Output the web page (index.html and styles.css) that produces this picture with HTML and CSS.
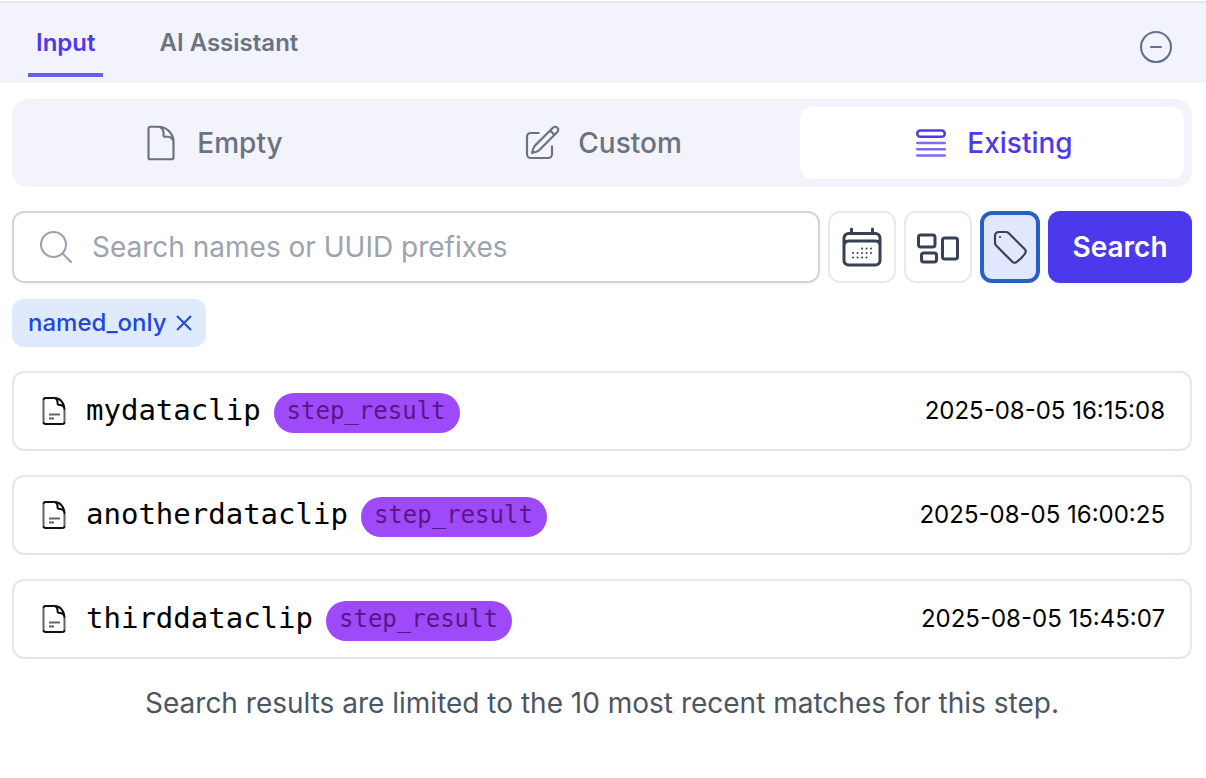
FILE: index.html
```html
<!DOCTYPE html>
<html lang="en">
<head>
<meta charset="utf-8">
<meta name="viewport" content="width=device-width, initial-scale=1">
<title>Input</title>
<link rel="stylesheet" href="styles.css">
</head>
<body>
<svg class="sprite" aria-hidden="true">
  <symbol id="clip" viewBox="0 0 24 28">
    <path opacity=".65" d="M1.500 3V25M22.500 13V25M7 17.500H18M7 21.500H12"/>
    <path d="M1.500 3Q1.500 1 3.500 1H13C18 1 22.500 6 22.500 13M1.500 25Q1.500 27 3.500 27H20.500Q22.500 27 22.500 25M13 1Q15.500 2 15.500 5V6Q15.500 8 17.500 8H18.500Q22.500 8.500 22.500 13"/>
  </symbol>
</svg>
<header class="bar">
  <nav class="tabs">
    <button class="tab tab-active" type="button">Input</button>
    <button class="tab" type="button">AI Assistant</button>
  </nav>
  <button class="collapse" type="button" aria-label="Collapse">
    <svg class="icon icon-thin" viewBox="0 0 24 24"><path d="M15 12H9m12 0a9 9 0 1 1-18 0 9 9 0 0 1 18 0Z"/></svg>
  </button>
</header>
<main class="panel">
  <div class="modes">
    <button class="mode" type="button">
      <svg class="icon icon-thin" viewBox="0 0 24 24"><path d="M19.500 14.250v-2.625a3.375 3.375 0 0 0-3.375-3.375h-1.500A1.125 1.125 0 0 1 13.500 7.125v-1.500a3.375 3.375 0 0 0-3.375-3.375H8.250m2.250 0H5.625c-.621 0-1.125.504-1.125 1.125v17.250c0 .621.504 1.125 1.125 1.125h12.750c.621 0 1.125-.504 1.125-1.125V11.250a9 9 0 0 0-9-9Z"/></svg>
      Empty
    </button>
    <button class="mode" type="button">
      <svg class="icon icon-thin" viewBox="0 0 24 24"><path d="m16.862 4.487 1.687-1.688a1.875 1.875 0 1 1 2.652 2.652L10.582 16.070a4.500 4.500 0 0 1-1.897 1.130L6 18l.8-2.685a4.500 4.500 0 0 1 1.130-1.897l8.932-8.931Zm0 0L19.500 7.125M18 14v4.750A2.250 2.250 0 0 1 15.750 21H5.250A2.250 2.250 0 0 1 3 18.750V8.250A2.250 2.250 0 0 1 5.250 6H10"/></svg>
      Custom
    </button>
    <button class="mode mode-active" type="button">
      <svg class="icon" viewBox="0 0 24 24"><path opacity=".75" d="M3.750 12h16.500m-16.500 3.750h16.500M3.750 19.500h16.500"/><path d="M5.625 4.500h12.750a1.875 1.875 0 0 1 0 3.750H5.625a1.875 1.875 0 0 1 0-3.750Z"/></svg>
      Existing
    </button>
  </div>

  <form class="search">
    <label class="field">
      <svg class="icon icon-thin" viewBox="0 0 24 24"><path d="m21 21-5.197-5.197m0 0A7.500 7.500 0 1 0 5.196 5.196a7.500 7.500 0 0 0 10.607 10.607Z"/></svg>
      <input class="query" type="text" placeholder="Search names or UUID prefixes" aria-label="Search names or UUID prefixes">
    </label>
    <button class="filter" type="button" aria-label="Filter by date">
      <svg class="icon icon-large" viewBox="0 0 24 24"><path d="M6.750 3v2.250M17.250 3v2.250M3 18.750V7.500a2.250 2.250 0 0 1 2.250-2.250h13.500A2.250 2.250 0 0 1 21 7.500v11.250m-18 0A2.250 2.250 0 0 0 5.250 21h13.500A2.250 2.250 0 0 0 21 18.750m-18 0v-7.500A2.250 2.250 0 0 1 5.250 9h13.500A2.250 2.250 0 0 1 21 11.250v7.500"/><path class="dots" d="M12 12.750h.01M12 15h.01M12 17.250h.01M9.750 15h.01M9.750 17.250h.01M7.500 15h.01M7.500 17.250h.01M14.250 12.750h.01M14.250 15h.01M14.250 17.250h.01M16.500 12.750h.01M16.500 15h.01"/></svg>
    </button>
    <button class="filter" type="button" aria-label="Filter by type">
      <svg class="icon icon-large" viewBox="0 0 24 24"><path d="M2.250 7.125C2.250 6.504 2.754 6 3.375 6h6c.621 0 1.125.504 1.125 1.125v3.750c0 .621-.504 1.125-1.125 1.125h-6a1.125 1.125 0 0 1-1.125-1.125v-3.750ZM14.250 8.625c0-.621.504-1.125 1.125-1.125h5.250c.621 0 1.125.504 1.125 1.125v8.250c0 .621-.504 1.125-1.125 1.125h-5.250a1.125 1.125 0 0 1-1.125-1.125v-8.250ZM3.750 16.125c0-.621.504-1.125 1.125-1.125h5.250c.621 0 1.125.504 1.125 1.125v2.250c0 .621-.504 1.125-1.125 1.125h-5.250a1.125 1.125 0 0 1-1.125-1.125v-2.250Z"/></svg>
    </button>
    <button class="filter filter-on" type="button" aria-label="Named only" aria-pressed="true">
      <svg class="icon icon-thin" viewBox="0 0 24 24"><path d="M9.568 3H5.250A2.250 2.250 0 0 0 3 5.250v4.318c0 .597.237 1.170.659 1.591l9.581 9.581c.699.699 1.780.872 2.607.330a18.095 18.095 0 0 0 5.223-5.223c.542-.827.369-1.908-.330-2.607L11.160 3.660A2.250 2.250 0 0 0 9.568 3Z"/><path d="M6 6h.008v.008H6V6Z"/></svg>
    </button>
    <button class="submit" type="submit">Search</button>
  </form>

  <div class="chips">
    <button class="chip" type="button" aria-label="Remove named_only">named_only
      <svg class="cross" viewBox="0 0 16 16"><path d="M1 1 15 15M15 1 1 15"/></svg>
    </button>
  </div>

  <ul class="clips">
    <li class="clip">
      <svg class="clip-icon"><use href="#clip"/></svg>
      <span class="name">mydataclip</span>
      <span class="badge">step_result</span>
      <time class="time">2025-08-05 16:15:08</time>
    </li>
    <li class="clip">
      <svg class="clip-icon"><use href="#clip"/></svg>
      <span class="name">anotherdataclip</span>
      <span class="badge">step_result</span>
      <time class="time">2025-08-05 16:00:25</time>
    </li>
    <li class="clip">
      <svg class="clip-icon"><use href="#clip"/></svg>
      <span class="name">thirddataclip</span>
      <span class="badge">step_result</span>
      <time class="time">2025-08-05 15:45:07</time>
    </li>
  </ul>
  <p class="note">Search results are limited to the 10 most recent matches for this step.</p>
</main>
</body>
</html>
```
FILE: styles.css
```css
* {
  box-sizing: border-box;
}

body {
  margin: 0;
  padding-top: 1px;
  background: #fff;
  color: #000;
  font-family: Inter, "Liberation Sans", sans-serif;
  font-size: 28px;
  line-height: 40px;
}

button {
  margin: 0;
  padding: 0;
  border: 0;
  background: none;
  color: inherit;
  font: inherit;
  cursor: pointer;
}

.sprite {
  display: none;
}

.icon {
  flex: none;
  display: block;
  width: 40px;
  height: 40px;
  fill: none;
  stroke: currentColor;
  stroke-width: 1.5;
  stroke-linecap: round;
  stroke-linejoin: round;
}

.icon-large {
  width: 48px;
  height: 48px;
}

.icon-thin {
  stroke-width: 1.3;
}

.dots {
  stroke-width: 1;
}

.bar {
  display: flex;
  justify-content: space-between;
  align-items: flex-start;
  height: 82px;
  padding: 0 30px 0 28px;
  border-top: 2px solid #e5e7eb;
  background: #f2f3fc;
}

.tabs {
  display: flex;
  gap: 48px;
}

.tab {
  padding: 24px 8px 14px;
  border-bottom: 4px solid transparent;
  color: #6b7280;
  font-size: 24px;
  font-weight: 600;
  line-height: 32px;
}

.tab-active {
  border-color: #6660e6;
  color: #4f39e8;
}

.collapse {
  margin-top: 24px;
  color: #64748b;
}

.panel {
  padding: 16px 14px 16px 12px;
}

.modes {
  display: grid;
  grid-template-columns: repeat(3, 1fr);
  gap: 6px;
  padding: 8px;
  border-radius: 16px;
  background: #f2f3fb;
}

.mode {
  display: flex;
  justify-content: center;
  align-items: center;
  gap: 16px;
  padding: 16px;
  border-radius: 12px;
  color: #6b7280;
  font-weight: 500;
}

.mode-active {
  background: #fff;
  color: #4f39e8;
}

.search {
  display: flex;
  gap: 8px;
  margin-top: 24px;
}

.field {
  flex: 1;
  display: flex;
  align-items: center;
  gap: 16px;
  min-width: 0;
  height: 72px;
  padding: 0 22px;
  border: 2px solid #d1d5db;
  border-radius: 12px;
  box-shadow: 0 2px 4px rgb(0 0 0 / 3%);
  color: #9ca3af;
}

.query {
  flex: 1;
  min-width: 0;
  padding: 0;
  border: 0;
  outline: 0;
  background: none;
  color: #111827;
  font: inherit;
}

.query::placeholder {
  color: #9ca3af;
  opacity: 1;
}

.filter {
  display: flex;
  justify-content: center;
  align-items: center;
  width: 68px;
  border: 2px solid #e8eaee;
  border-radius: 12px;
  color: #374151;
}

.filter-on {
  width: 60px;
  border: 4px solid #285fc2;
  background: #e0e7ff;
}

.submit {
  width: 144px;
  border-radius: 12px;
  background: #4b39eb;
  box-shadow: 0 2px 4px rgb(0 0 0 / 5%);
  color: #fff;
  font-weight: 600;
}

.chips {
  display: flex;
  margin-top: 16px;
}

.chip {
  display: flex;
  align-items: center;
  gap: 9px;
  padding: 8px 14px 8px 16px;
  border-radius: 12px;
  background: #dfeafd;
  color: #2148db;
  font-size: 24px;
  font-weight: 500;
  line-height: 32px;
}

.cross {
  width: 16px;
  height: 16px;
  fill: none;
  stroke: currentColor;
  stroke-width: 2;
}

.clips {
  display: grid;
  gap: 24px;
  margin: 24px 0 0;
  padding: 0;
  list-style: none;
}

.clip {
  display: flex;
  align-items: center;
  height: 80px;
  padding: 0 25px 0 28px;
  border: 2px solid #e5e7eb;
  border-radius: 12px;
}

.clip-icon {
  flex: none;
  width: 24px;
  height: 28px;
  fill: none;
  stroke: #111;
  stroke-width: 2;
}

.name {
  margin: 0 13px 2px 20px;
  font-family: "DejaVu Sans Mono", monospace;
  font-size: 29px;
}

.badge {
  margin-top: 4px;
  padding: 0 14px 4px 13px;
  border-radius: 20px;
  background: #9f4af8;
  color: #59168b;
  font-family: "DejaVu Sans Mono", monospace;
  font-size: 24px;
  line-height: 36px;
}

.time {
  margin-left: auto;
  font-size: 24px;
}

.note {
  margin: 24px 0 0;
  color: #4b5563;
  text-align: center;
}
```
